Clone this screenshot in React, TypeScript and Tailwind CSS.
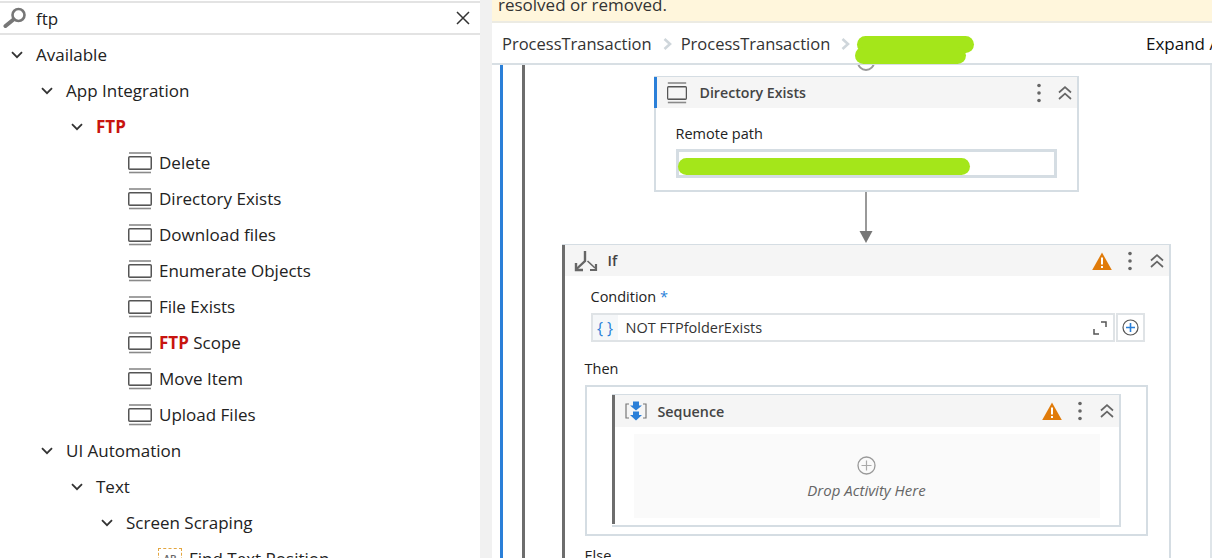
const font = "font-['Open_Sans','Noto_Sans',sans-serif]";

function Chevron({ className = "" }: { className?: string }) {
  return (
    <svg width="12" height="8" viewBox="0 0 12 8" className={className} fill="none" stroke="#333" strokeWidth="1.8">
      <path d="M1 1.2 L6 6.2 L11 1.2" />
    </svg>
  );
}

function ActivityIcon({ className = "", w = 24 }: { className?: string; w?: number }) {
  return (
    <svg width={w} height="22" viewBox="0 0 24 22" preserveAspectRatio="none" className={className} fill="none">
      <path d="M1 1 H23" stroke="#8a8a8a" strokeWidth="1.6" />
      <rect x="0.75" y="4.75" width="22.5" height="12.5" rx="1" stroke="#555" strokeWidth="1.5" />
      <path d="M2 16.5 H22" stroke="#999" strokeWidth="1" />
      <path d="M1 20.5 H23" stroke="#8a8a8a" strokeWidth="1.6" />
    </svg>
  );
}

function Dots() {
  return (
    <svg width="6" height="20" viewBox="0 0 6 20" fill="#666">
      <circle cx="3" cy="2.5" r="1.8" />
      <circle cx="3" cy="10" r="1.8" />
      <circle cx="3" cy="17.5" r="1.8" />
    </svg>
  );
}

function Collapse() {
  return (
    <svg width="14" height="14" viewBox="0 0 14 14" fill="none" stroke="#666" strokeWidth="1.7">
      <path d="M1 6.5 L7 1.2 L13 6.5" />
      <path d="M1 13 L7 7.7 L13 13" />
    </svg>
  );
}

function Warning() {
  return (
    <svg width="20" height="18" viewBox="0 0 20 18">
      <path d="M10 0.5 L19.8 18 H0.2 Z" fill="#e07b0a" />
      <rect x="9" y="5.5" width="2" height="7" fill="#fff" />
      <rect x="9" y="14" width="2" height="2" fill="#fff" />
    </svg>
  );
}

function Crumb() {
  return (
    <svg width="9" height="12" viewBox="0 0 9 12" fill="none" stroke="#cfd6db" strokeWidth="2.6">
      <path d="M1.5 1 L7 6 L1.5 11" />
    </svg>
  );
}

function Branch({ label, className }: { label: string; className: string }) {
  return (
    <div className={"flex h-9 items-center " + className}>
      <Chevron className="mr-[13px] shrink-0" />
      <span className="whitespace-nowrap">{label}</span>
    </div>
  );
}

function Leaf({ children }: { children: React.ReactNode }) {
  return (
    <div className="flex h-9 items-center pl-[128px]">
      <ActivityIcon className="mr-[7px] shrink-0" />
      <span className="whitespace-nowrap">{children}</span>
    </div>
  );
}

function Palette() {
  return (
    <aside className="flex h-full w-[480px] shrink-0 flex-col overflow-hidden bg-white pt-px text-[17px] text-[#222]">
      <div className="flex h-[34px] shrink-0 items-center border-y-2 border-[#e3e3e3] pl-[3px] pr-[10px]">
        <svg width="24" height="22" viewBox="0 0 24 22" fill="none" className="mr-[9px] shrink-0">
          <circle cx="15.5" cy="8" r="6" stroke="#777" strokeWidth="2.6" />
          <path d="M10.5 12.5 L2.5 19" stroke="#777" strokeWidth="4" strokeLinecap="round" />
        </svg>
        <span className="flex-1 pt-px">ftp</span>
        <svg width="14" height="14" viewBox="0 0 14 14" stroke="#333" strokeWidth="1.5">
          <path d="M1 1 L13 13 M13 1 L1 13" />
        </svg>
      </div>
      <div className="pt-[2px]">
        <Branch label="Available" className="pl-[11px]" />
        <Branch label="App Integration" className="pl-[41px]" />
        <div className="flex h-9 items-center pl-[71px]">
          <Chevron className="mr-[13px] shrink-0" />
          <span className="font-bold text-[#c8140f]">FTP</span>
        </div>
        <Leaf>Delete</Leaf>
        <Leaf>Directory Exists</Leaf>
        <Leaf>Download files</Leaf>
        <Leaf>Enumerate Objects</Leaf>
        <Leaf>File Exists</Leaf>
        <Leaf>
          <span className="font-bold text-[#c8140f]">FTP</span> Scope
        </Leaf>
        <Leaf>Move Item</Leaf>
        <Leaf>Upload Files</Leaf>
        <Branch label="UI Automation" className="pl-[41px]" />
        <Branch label="Text" className="pl-[71px]" />
        <Branch label="Screen Scraping" className="pl-[101px]" />
        <div className="flex h-9 items-center pl-[158px]">
          <span className="mr-[7px] flex h-[22px] w-[24px] shrink-0 items-center justify-center border border-dashed border-[#e3a640] text-[10px] font-semibold text-[#666]">
            AB
          </span>
          <span className="whitespace-nowrap">Find Text Position</span>
        </div>
      </div>
    </aside>
  );
}

function Designer() {
  return (
    <div className="relative flex min-h-0 flex-1 flex-col overflow-hidden">
      <div className="h-[23px] shrink-0 overflow-hidden border-b-2 border-[#ecebe3] bg-[#fff6dc] pl-[6px] text-[17px] leading-[10px] text-[#333]">
        resolved or removed.
      </div>
      <div className="relative z-10 flex h-[42px] shrink-0 items-center overflow-hidden whitespace-nowrap border-b-2 border-[#d8dfe4] bg-white pl-[10px] pt-[2px] text-[16.5px] text-[#333]">
        <span>ProcessTransaction</span>
        <span className="ml-[11px] mr-[9px] flex"><Crumb /></span>
        <span>ProcessTransaction</span>
        <span className="ml-[11px] flex"><Crumb /></span>
        <span className="absolute left-[654px] text-[17px] text-[#111]">Expand All</span>
      </div>
      <svg width="122" height="32" viewBox="0 0 122 32" className="absolute left-[363px] top-[34px] z-20" fill="none" stroke="#a4e61a" strokeLinecap="round" strokeLinejoin="round">
        <path d="M10.5 10.5 H110.5" strokeWidth="17" />
        <path d="M8.5 21.5 H102.5" strokeWidth="17" />
      </svg>

      <div className="min-h-0 flex-1 overflow-hidden border-r-2 border-[#dfe5e9] pl-[8px] pr-px">
        <div className="h-full border-l-[3px] border-[#2a7fd8] pl-[19px]">
          <div className="flex h-full flex-col items-center overflow-hidden border-l-[3px] border-[#6d6d6d] pr-[2px]">
            <div className="-mt-[12px] h-[18px] w-[18px] shrink-0 rounded-full border-2 border-[#9a9a9a]" />
            <section className="mt-[5px] w-[425px] shrink-0 border-2 border-[#d5dde3] text-[14.5px]">
              <header className="-ml-[2px] -mt-px flex h-[31px] items-center border-l-[3px] border-[#2a7fd8] bg-[#f5f5f5] pl-[10px] pr-[5px]">
                <ActivityIcon className="mr-[13px]" w={20} />
                <span className="flex-1 text-[14.2px] font-semibold text-[#444]">Directory Exists</span>
                <span className="mr-[16px] flex"><Dots /></span>
                <Collapse />
              </header>
              <div className="px-[20px] pb-[12px] pt-[15px]">
                <div className="leading-[21px] text-[#222]">Remote path</div>
                <div className="relative mt-[5px] h-[29px] border-[3px] border-[#d5dde3]">
                  <div className="absolute -left-px top-[6px] h-[17px] w-[292px] rounded-full bg-[#a4e61a]" />
                </div>
              </div>
            </section>
            <svg width="14" height="52" viewBox="0 0 14 52" className="shrink-0">
              <path d="M7 0 V42" stroke="#777" strokeWidth="1.5" />
              <path d="M0.5 39 H13.5 L7 51 Z" fill="#777" />
            </svg>
            <section className="w-[609px] shrink-0 border-2 border-l-0 border-[#d5dde3] text-[14.5px]">
              <div className="border-l-[3px] border-[#6d6d6d]">
                <header className="-mt-px flex h-[31px] items-center bg-[#f5f5f5] pl-[9px] pr-[5px]">
                  <svg width="24" height="22" viewBox="0 0 24 22" fill="none" stroke="#666" className="mr-[10px] shrink-0">
                    <path d="M11 1 V11 L2.5 19" strokeWidth="2.4" />
                    <path d="M2 13 V20 H9" strokeWidth="2.4" />
                    <path d="M13.5 11 L21 18" strokeWidth="1.6" />
                    <path d="M16 20 H22 V14" strokeWidth="2.2" />
                  </svg>
                  <span className="flex-1 font-semibold text-[#444]">If</span>
                  <span className="mr-[15px] flex"><Warning /></span>
                  <span className="mr-[17px] flex"><Dots /></span>
                  <Collapse />
                </header>
                <div className="pl-[20px] pr-[20px] pt-[11px]">
                  <div className="pl-[6px] leading-[20px] text-[#222]">
                    Condition <span className="text-[#2a7fd8]">*</span>
                  </div>
                  <div className="ml-[6px] mt-[6px] flex h-[29px] w-[554px] gap-px">
                    <div className="flex flex-1 items-center border-2 border-[#dfe3e6]">
                      <span className="flex h-full w-[25px] items-center justify-center bg-[#f5f7f9] text-[16px] text-[#2a7fd8]">{"{ }"}</span>
                      <span className="ml-[8px] flex-1 pt-px text-[#333]">NOT FTPfolderExists</span>
                      <svg width="14" height="14" viewBox="0 0 14 14" fill="none" stroke="#555" strokeWidth="1.5" className="mr-[6px]">
                        <path d="M8 1 H13 V6" />
                        <path d="M1 8 V13 H6" />
                      </svg>
                    </div>
                    <div className="flex w-[29px] items-center justify-center border-2 border-[#dfe3e6]">
                      <svg width="17" height="17" viewBox="0 0 17 17" fill="none">
                        <circle cx="8.5" cy="8.5" r="7.5" stroke="#555" strokeWidth="1.2" />
                        <path d="M8.5 4 V13 M4 8.5 H13" stroke="#2a7fd8" strokeWidth="1.6" />
                      </svg>
                    </div>
                  </div>
                  <div className="mt-[17px] leading-[20px] text-[#222]">Then</div>
                  <div className="mt-[6px] h-[151px] w-[563px] border-2 border-[#d5dde3] px-[25px] pt-[7px]">
                    <div className="h-[133px] border-2 border-l-0 border-[#d5dde3]">
                      <div className="h-full border-l-[3px] border-[#6d6d6d]">
                        <header className="-mt-px flex h-[32px] items-center bg-[#f5f5f5] pl-[10px] pr-[5px]">
                          <svg width="22" height="20" viewBox="0 0 22 20" fill="none" className="mr-[11px] shrink-0">
                            <path d="M4 3 H1 V17 H4 M18 3 H21 V17 H18" stroke="#777" strokeWidth="1.2" />
                            <path d="M8 0.5 H14 V4.5 H17 L11 9.5 L5 4.5 H8 Z" fill="#2a7fd8" />
                            <path d="M8 10.5 H14 V14 H17 L11 19.5 L5 14 H8 Z" fill="#2a7fd8" />
                          </svg>
                          <span className="flex-1 pt-px text-[14.3px] font-semibold text-[#444]">Sequence</span>
                          <span className="mr-[15px] flex"><Warning /></span>
                          <span className="mr-[17px] flex"><Dots /></span>
                          <Collapse />
                        </header>
                        <div className="mx-[19px] mt-[7px] flex h-[84px] flex-col items-center bg-[#fafafa] pt-[22px]">
                          <svg width="19" height="19" viewBox="0 0 19 19" fill="none">
                            <circle cx="9.5" cy="9.5" r="8.5" stroke="#999" strokeWidth="1.3" />
                            <path d="M9.5 4.5 V14.5 M4.5 9.5 H14.5" stroke="#aaa" strokeWidth="1.2" />
                          </svg>
                          <span className="mt-[4px] text-[15px] italic text-[#666]">Drop Activity Here</span>
                        </div>
                      </div>
                    </div>
                  </div>
                  <div className="mt-[10px] leading-[20px] text-[#222]">Else</div>
                </div>
              </div>
            </section>
          </div>
        </div>
      </div>
    </div>
  );
}

export default function App() {
  return (
    <div className={"flex h-[558px] w-[1212px] overflow-hidden bg-white " + font}>
      <Palette />
      <div className="h-full w-[12px] shrink-0 bg-[#f1f1f1]" />
      <Designer />
    </div>
  );
}
